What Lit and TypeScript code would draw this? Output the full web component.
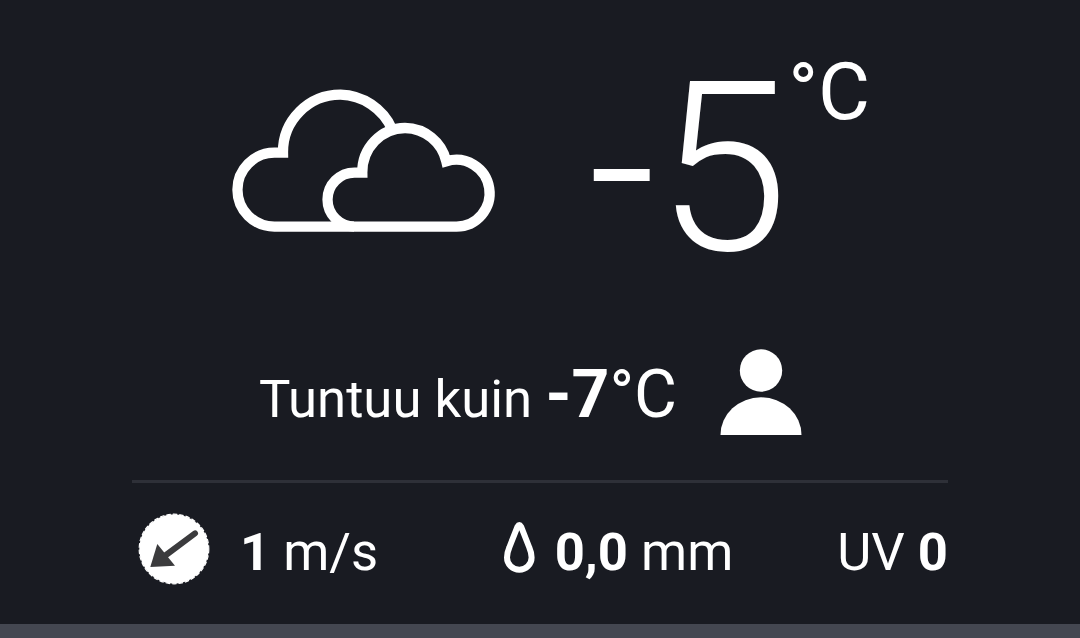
import { LitElement, html, css } from "lit";
import { customElement } from "lit/decorators.js";

@customElement("app-root")
export class AppRoot extends LitElement {
  static styles = css`
    :host {
      display: block;
      height: 638px;
      background: #191b22;
      color: #fff;
      font-family: Roboto, sans-serif;
      overflow: hidden;
    }
    .page { display: flex; flex-direction: column; height: 638px; white-space: nowrap; }
    svg { display: block; flex: none; }
    .now { display: flex; align-items: flex-start; height: 340px; padding-left: 220px; box-sizing: border-box; }
    .clouds { margin-top: 80px; }
    .temp { font-size: 238.5px; font-weight: 300; line-height: 240px; margin: 49px 0 0 78px; }
    .unit { font-size: 80px; line-height: 80px; margin: 52px 0 0 -0.5px; }
    .feels { display: flex; align-items: flex-start; height: 140px; padding-left: 259px; box-sizing: border-box; }
    .label { font-size: 52.7px; line-height: 60px; margin-top: 29px; width: 271px; }
    .value { font-size: 66px; line-height: 70px; margin: 20px 0 0 15.5px; width: 134px; }
    .person { margin: 8px 0 0 39.5px; }
    .rule { height: 3px; margin: 0 132px; background: #2e3038; }
    .stats { display: flex; align-items: flex-start; height: 141px; padding: 0 132px; font-size: 52.6px; line-height: 60px; }
    .stat { display: flex; align-items: flex-start; }
    .stat span { margin-top: 39px; }
    .wind { margin: 26px 26px 0 2px; }
    .gust { width: 258px; }
    .rain { margin-left: 108px; }
    .drop { margin: 32px 14.7px 0 0; }
    .uv { margin-left: auto; }
    .foot { height: 14px; background: #444751; }
    b { font-weight: 700; }
  `;

  render() {
    return html`
      <div class="page">
        <div class="now">
          <svg class="clouds" width="290" height="160" viewBox="220 80 290 160" fill="none" stroke="#fff" stroke-width="10.3">
            <path d="M392 129A58 58 0 0 0 340.500 94.700A57.300 57.300 0 0 0 283 152.700H274.400A36.900 36.900 0 0 0 274.400 226.600H354" />
            <path d="M354.500 226.600A27 27 0 0 1 354.500 172.600H362.300A42.900 44 0 0 1 405 128A42.900 42.900 0 0 1 446.300 161.300A33.400 33.400 0 1 1 456.500 226.600Z" />
          </svg>
          <div class="temp">-5</div>
          <div class="unit">°C</div>
        </div>
        <div class="feels">
          <div class="label">Tuntuu kuin</div>
          <div class="value"><b>-7</b>°C</div>
          <svg class="person" width="84" height="88" viewBox="719 348 84 88" fill="#fff">
            <circle cx="761" cy="370.500" r="21.200" />
            <path d="M720.500 435A40.500 37.700 0 0 1 801.500 435Z" />
          </svg>
        </div>
        <div class="rule"></div>
        <div class="stats">
          <div class="stat gust">
            <svg class="wind" width="80" height="80" viewBox="134 509 80 80">
              <circle cx="174" cy="549" r="34.700" fill="#fff" />
              <circle cx="174" cy="549" r="34.800" fill="none" stroke="#fff" stroke-width="1.200" stroke-dasharray="4.500 2" />
              <path d="M195 533.300L166 555" stroke="#3b3b3d" stroke-width="6" stroke-linecap="round" />
              <path d="M157.300 544L150.300 567L175 565.700Z" fill="#3b3b3d" />
            </svg>
            <span><b>1</b> m/s</span>
          </div>
          <div class="stat rain">
            <svg class="drop" width="42" height="65" viewBox="498 515 42 65" fill="none" stroke="#fff" stroke-width="6" stroke-linejoin="round">
              <path d="M517.500 526.700Q519.300 523.500 521.100 526.700L529.300 547.500C530.800 551 531.600 554 531.600 557.500A12.300 12.300 0 0 1 507 557.500C507 554 507.800 551 509.300 547.500Z" />
            </svg>
            <span><b>0,0</b> mm</span>
          </div>
          <div class="stat uv"><span>UV <b>0</b></span></div>
        </div>
        <div class="foot"></div>
      </div>
    `;
  }
}
